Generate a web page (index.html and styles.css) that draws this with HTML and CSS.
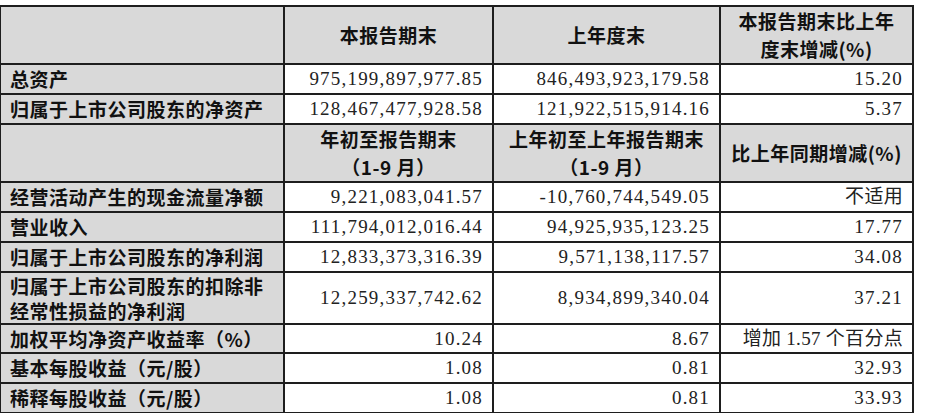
FILE: index.html
```html
<!DOCTYPE html>
<html lang="zh-CN">
<head>
<meta charset="utf-8">
<title>主要财务数据</title>
<link rel="stylesheet" href="styles.css">
</head>
<body>
<div class="page">
<table class="fin">
  <colgroup>
    <col class="c1"><col class="c2"><col class="c3"><col class="c4">
  </colgroup>
  <tr class="h1">
    <td class="lab"></td>
    <td class="head">本报告期末</td>
    <td class="head">上年度末</td>
    <td class="head">本报告期末比上年<br>度末增减(%)</td>
  </tr>
  <tr class="r31">
    <td class="lab">总资产</td>
    <td class="num">975,199,897,977.85</td>
    <td class="num">846,493,923,179.58</td>
    <td class="num">15.20</td>
  </tr>
  <tr class="r31">
    <td class="lab">归属于上市公司股东的净资产</td>
    <td class="num">128,467,477,928.58</td>
    <td class="num">121,922,515,914.16</td>
    <td class="num">5.37</td>
  </tr>
  <tr class="h2">
    <td class="lab"></td>
    <td class="head">年初至报告期末<br>（1-9 月）</td>
    <td class="head">上年初至上年报告期末<br>（1-9 月）</td>
    <td class="head">比上年同期增减(%)</td>
  </tr>
  <tr class="r31">
    <td class="lab">经营活动产生的现金流量净额</td>
    <td class="num">9,221,083,041.57</td>
    <td class="num">-10,760,744,549.05</td>
    <td class="num cn">不适用</td>
  </tr>
  <tr class="r30">
    <td class="lab">营业收入</td>
    <td class="num">111,794,012,016.44</td>
    <td class="num">94,925,935,123.25</td>
    <td class="num">17.77</td>
  </tr>
  <tr class="r30">
    <td class="lab">归属于上市公司股东的净利润</td>
    <td class="num">12,833,373,316.39</td>
    <td class="num">9,571,138,117.57</td>
    <td class="num">34.08</td>
  </tr>
  <tr class="r52">
    <td class="lab two">归属于上市公司股东的扣除非<br>经常性损益的净利润</td>
    <td class="num">12,259,337,742.62</td>
    <td class="num">8,934,899,340.04</td>
    <td class="num">37.21</td>
  </tr>
  <tr class="r29">
    <td class="lab">加权平均净资产收益率（%）</td>
    <td class="num">10.24</td>
    <td class="num">8.67</td>
    <td class="num cn">增加 1.57 个百分点</td>
  </tr>
  <tr class="r30">
    <td class="lab">基本每股收益（元/股）</td>
    <td class="num">1.08</td>
    <td class="num">0.81</td>
    <td class="num">32.93</td>
  </tr>
  <tr class="r30">
    <td class="lab">稀释每股收益（元/股）</td>
    <td class="num">1.08</td>
    <td class="num">0.81</td>
    <td class="num">33.93</td>
  </tr>
</table>
</div>
</body>
</html>
```

FILE: styles.css
```css
html, body {
  margin: 0;
  padding: 0;
  background: #ffffff;
}

.page {
  padding-top: 5px;
  width: 940px;
  height: 413px;
  overflow: hidden;
  box-sizing: border-box;
}

.fin {
  border-collapse: collapse;
  table-layout: fixed;
  width: 913px;
  margin-left: -1px;
}

.c1 { width: 284px; }
.c2 { width: 209px; }
.c3 { width: 227px; }
.c4 { width: 193px; }

.fin td {
  border: 2px solid #1e1e1e;
  padding: 0;
  box-sizing: border-box;
  vertical-align: middle;
}

.lab {
  background: #d9d9d9;
  font-family: "Noto Sans CJK SC", "Liberation Sans", sans-serif;
  font-weight: 700;
  font-size: 19px;
  letter-spacing: 0.5px;
  color: #111;
  padding-left: 9px !important;
  white-space: nowrap;
  line-height: 24px;
}

.lab.two {
  line-height: 25px;
}

.head {
  background: #d9d9d9;
  font-family: "Noto Sans CJK SC", "Liberation Sans", sans-serif;
  font-weight: 700;
  font-size: 19px;
  letter-spacing: 0.5px;
  color: #111;
  text-align: center;
  line-height: 28px;
  white-space: nowrap;
}

.num {
  background: #ffffff;
  font-family: "Liberation Serif", "Noto Sans CJK SC", serif;
  font-size: 19px;
  letter-spacing: 1.2px;
  color: #222;
  text-align: right;
  padding-right: 9px !important;
  white-space: nowrap;
  line-height: 22px;
}

.num.cn {
  font-family: "Liberation Serif", "Noto Sans CJK SC", serif;
  font-weight: 400;
  letter-spacing: 0.3px;
}

.h1 td { height: 56px; }
.h2 td { height: 57px; }
.r31 td { height: 30px; }
.r30 td { height: 30px; }
.r29 td { height: 29px; }
.r52 td { height: 51px; }
```
